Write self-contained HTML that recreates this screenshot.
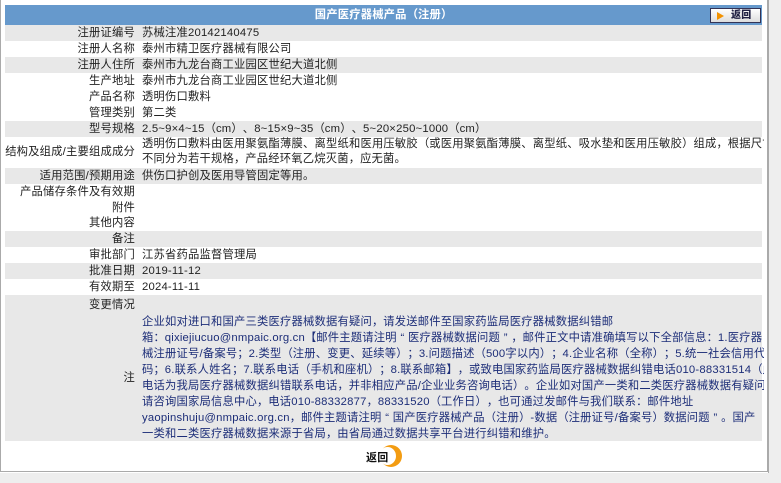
<!DOCTYPE html>
<html><head><meta charset="utf-8"><style>
body{margin:0;width:781px;height:483px;background:#fff;font-family:"Liberation Sans","Noto Sans CJK SC",sans-serif;font-size:11.3px;letter-spacing:0.2px;color:#222;position:relative;overflow:hidden;text-spacing-trim:space-all}
.p{display:inline-block;width:1em;text-align:center;letter-spacing:0}
.outer{position:absolute;left:0;top:0;width:766px;height:471px;border:1px solid #aaa;border-top:none;background:#fff}
.side{position:absolute;left:768px;top:0;width:13px;height:483px;background:#eee;border-left:1px solid #aaa}
.bot{position:absolute;left:0;top:473px;width:781px;height:10px;background:#eee}
.hd{position:absolute;left:5px;top:5px;width:757px;height:20px;background:#6699cc;color:#fff;font-weight:bold;text-align:center;line-height:20px}
.btn{position:absolute;left:710px;top:8px;width:49px;height:13px;border:1px solid #335;background:linear-gradient(#fff,#ddd);font-size:10px;color:#224;line-height:13px;font-weight:bold}
.btn i{position:absolute;left:6px;top:3px;width:0;height:0;border-left:7px solid #f39200;border-top:4px solid transparent;border-bottom:4px solid transparent}
.btn b{position:absolute;left:20px;top:0}
.r{position:absolute;left:5px;width:757px}
.g{background:#e8e8e8}
.l{position:absolute;right:627px;white-space:nowrap;text-align:right}
.v{position:absolute;left:137px;white-space:nowrap;width:622px;overflow:hidden}
.note{color:#1c2d78;line-height:16px}
</style></head><body>
<div class="outer"></div><div class="side"></div><div class="bot"></div>
<div class="hd">国产医疗器械产品（注册）</div>
<div class="btn"><i></i><b>返回</b></div>

<div class="r g" style="top:25px;height:16px;line-height:16px"><span class="l">注册证编号</span><span class="v">苏械注准20142140475</span></div>
<div class="r" style="top:41px;height:16px;line-height:16px"><span class="l">注册人名称</span><span class="v">泰州市精卫医疗器械有限公司</span></div>
<div class="r g" style="top:57px;height:16px;line-height:16px"><span class="l">注册人住所</span><span class="v">泰州市九龙台商工业园区世纪大道北侧</span></div>
<div class="r" style="top:73px;height:16px;line-height:16px"><span class="l">生产地址</span><span class="v">泰州市九龙台商工业园区世纪大道北侧</span></div>
<div class="r" style="top:89px;height:16px;line-height:16px"><span class="l">产品名称</span><span class="v">透明伤口敷料</span></div>
<div class="r" style="top:105px;height:16px;line-height:16px"><span class="l">管理类别</span><span class="v">第二类</span></div>
<div class="r g" style="top:121px;height:16px;line-height:16px"><span class="l">型号规格</span><span class="v">2.5~9×4~15（cm）、8~15×9~35（cm）、5~20×250~1000（cm）</span></div>
<div class="r" style="top:137px;height:31px;line-height:15px"><span class="l" style="top:8px">结构及组成/主要组成成分</span><span class="v" style="top:0">透明伤口敷料由医用聚氨酯薄膜、离型纸和医用压敏胶（或医用聚氨酯薄膜、离型纸、吸水垫和医用压敏胶）组成，根据尺寸<br>不同分为若干规格，产品经环氧乙烷灭菌，应无菌。</span></div>
<div class="r g" style="top:168px;height:16px;line-height:16px"><span class="l">适用范围/预期用途</span><span class="v">供伤口护创及医用导管固定等用。</span></div>
<div class="r" style="top:184px;height:16px;line-height:16px"><span class="l">产品储存条件及有效期</span></div>
<div class="r" style="top:200px;height:16px;line-height:16px"><span class="l">附件</span></div>
<div class="r" style="top:216px;height:15px;line-height:15px"><span class="l">其他内容</span></div>
<div class="r g" style="top:231px;height:16px;line-height:16px"><span class="l">备注</span></div>
<div class="r" style="top:247px;height:16px;line-height:16px"><span class="l">审批部门</span><span class="v">江苏省药品监督管理局</span></div>
<div class="r g" style="top:263px;height:16px;line-height:16px"><span class="l">批准日期</span><span class="v">2019-11-12</span></div>
<div class="r" style="top:279px;height:16px;line-height:16px"><span class="l">有效期至</span><span class="v">2024-11-11</span></div>
<div class="r g" style="top:295px;height:146px;line-height:16px"><span class="l" style="top:2px">变更情况</span><span class="l" style="top:75px">注</span>
<div class="v note" style="top:19px">企业如对进口和国产三类医疗器械数据有疑问，请发送邮件至国家药监局医疗器械数据纠错邮<br>箱：qixiejiucuo@nmpaic.org.cn【邮件主题请注明“医疗器械数据问题”，邮件正文中请准确填写以下全部信息：1.医疗器<br>械注册证号/备案号；2.类型（注册、变更、延续等）；3.问题描述（500字以内）；4.企业名称（全称）；5.统一社会信用代<br>码；6.联系人姓名；7.联系电话（手机和座机）；8.联系邮箱】，或致电国家药监局医疗器械数据纠错电话010-88331514（此<br>电话为我局医疗器械数据纠错联系电话，并非相应产品/企业业务咨询电话）。企业如对国产一类和二类医疗器械数据有疑问，<br>请咨询国家局信息中心，电话010-88332877，88331520（工作日），也可通过发邮件与我们联系：邮件地址<br>yaopinshuju@nmpaic.org.cn，邮件主题请注明“国产医疗器械产品（注册）-数据（注册证号/备案号）数据问题”。国产<br>一类和二类医疗器械数据来源于省局，由省局通过数据共享平台进行纠错和维护。</div></div>

<div style="position:absolute;left:380px;top:445px;width:22px;height:22px;border-radius:50%;background:#f39c12"></div>
<div style="position:absolute;left:379px;top:447px;width:17px;height:18px;border-radius:50%;background:#fff"></div>
<div style="position:absolute;left:366px;top:449px;font-size:11px;font-weight:bold;color:#111">返回</div>
<script>
document.querySelectorAll('.v,.hd').forEach(function(e){
e.innerHTML=e.innerHTML.replace(/([（）：；，“”【】])/g,'<span class="p">$1</span>');});
</script>
</body></html>
